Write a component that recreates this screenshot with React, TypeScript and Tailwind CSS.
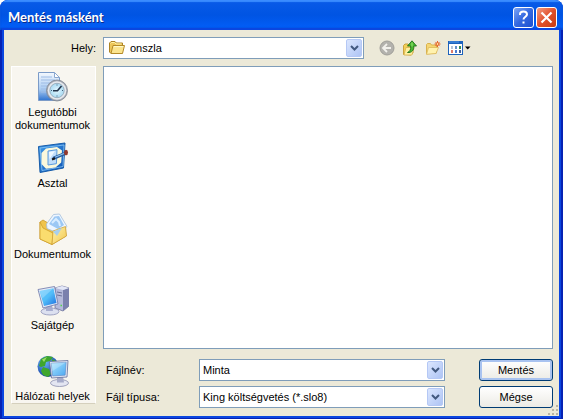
import { useState, type ReactNode } from 'react'

interface Place {
  id: string
  label: string
  icon: ReactNode
}

function RecentIcon() {
  return (
    <svg viewBox="0 0 32 32" className="size-8" aria-hidden="true">
      <defs>
        <linearGradient id="recentPage" x1="0" y1="0" x2="0" y2="1">
          <stop offset="0" stopColor="#f4f9ff" />
          <stop offset=".6" stopColor="#a9cbf2" />
          <stop offset="1" stopColor="#2f73cf" />
        </linearGradient>
        <radialGradient id="recentFace" cx=".5" cy=".5" r=".5">
          <stop offset="0" stopColor="#e3f7ff" />
          <stop offset="1" stopColor="#a8daf2" />
        </radialGradient>
      </defs>
      <path d="M1.500 1.500h16l5 5V29.500h-21z" fill="url(#recentPage)" stroke="#7b9bc8" strokeWidth="1" />
      <path d="M17.500 1.500v5h5z" fill="#fff" stroke="#8ba8d0" />
      <path d="M4 6h11M4 9h14M4 12h9M4 15h7M4 18h6M4 21h6" stroke="#9dbbe6" strokeWidth="1.200" />
      <circle cx="20" cy="19.500" r="10.500" fill="#a9aeb8" stroke="#7f858f" strokeWidth=".8" />
      <circle cx="20" cy="19.500" r="9.300" fill="#e6e9ee" />
      <circle cx="20" cy="19.500" r="7.200" fill="url(#recentFace)" stroke="#8fa3b3" strokeWidth=".8" />
      <path d="M20 13.500v1M20 24.500v1M14 19.500h1M25 19.500h1" stroke="#46627c" />
      <path d="M24.500 15l-4 4.800H16" fill="none" stroke="#22344b" strokeWidth="1.600" />
    </svg>
  )
}

function DesktopIcon() {
  return (
    <svg viewBox="0 0 32 32" className="size-8" aria-hidden="true">
      <defs>
        <linearGradient id="deskFrame" x1="0" y1="0" x2="1" y2="1">
          <stop offset="0" stopColor="#3f9aea" />
          <stop offset="1" stopColor="#0e52b2" />
        </linearGradient>
      </defs>
      <path d="M1.500 4.500l26.500-3.500-1.500 25-23.500 4.500z" fill="url(#deskFrame)" stroke="#175ca9" />
      <path d="M3 6l24-3-1 21.500-21 4z" fill="none" stroke="#8cc8f5" strokeWidth=".8" />
      <path d="M9 6.500l11-1.500 5 3.500-.8 12-5.700 5-9.500 1.300-4.500-4.800V11z" fill="#fbf9dc" />
      <path d="M11 9l9-1.300-.6 14L11 23z" fill="#c0defa" stroke="#5b9bdc" />
      <path d="M12 10l6-1-5.500 8z" fill="#eef8ff" />
      <path d="M17 16l11-4.500" stroke="#2a5d9c" strokeWidth="3" strokeLinecap="round" />
      <path d="M18 15.200l9-3.700" stroke="#8fc4f3" strokeWidth="1.200" />
      <path d="M15 17.500l3-1.200" stroke="#191919" strokeWidth="2" />
      <ellipse cx="29" cy="10.500" rx="2" ry="2.700" fill="#93392d" />
    </svg>
  )
}

function DocumentsIcon() {
  return (
    <svg viewBox="0 0 32 32" className="size-8" aria-hidden="true">
      <defs>
        <linearGradient id="docsFront" x1="0" y1="0" x2="1" y2="1">
          <stop offset="0" stopColor="#fff4ae" />
          <stop offset="1" stopColor="#f2c64c" />
        </linearGradient>
      </defs>
      <path d="M3 9l3-2 5 3 17 4 1 9-14 8.500L3 26z" fill="#f0c44c" stroke="#c99a30" strokeWidth=".8" />
      <path d="M9.500 11L16.500 1.500l6-.5 7.500 12.500-8 7-12-5z" fill="#eef6ff" stroke="#a3bedb" strokeWidth=".8" />
      <path d="M12 11l5.500-7.500 4.500-.5 5 9-6 4z" fill="#9cc8f4" />
      <path d="M15 10l4-4 3 3 1 4" fill="none" stroke="#d9edff" strokeWidth="2" />
      <path d="M3 9l3 6 10 5-1 11.500L3 26z" fill="#fadc6e" stroke="#cf9f2c" strokeWidth=".8" />
      <path d="M16 18l12.500-4.500 1 9.500L15 31.500z" fill="url(#docsFront)" stroke="#cfa138" strokeWidth=".8" />
      <path d="M16 18.500l9-3.500-5 8z" fill="#a9d0ee" />
    </svg>
  )
}

function ComputerIcon() {
  return (
    <svg viewBox="0 0 32 32" className="size-8" aria-hidden="true">
      <defs>
        <linearGradient id="pcScreen" x1="0" y1="0" x2="1" y2="1">
          <stop offset="0" stopColor="#64c8ff" />
          <stop offset=".5" stopColor="#52bdf8" />
          <stop offset="1" stopColor="#1d6fe0" />
        </linearGradient>
      </defs>
      <path d="M18 4l7-2 7 2v18l-6 5-8-3z" fill="#b5badb" stroke="#6e739c" strokeWidth=".8" />
      <path d="M26 6l6-2v18l-6 5z" fill="#7a80ad" />
      <path d="M18 4l7-2 7 2-6 2z" fill="#e3e7f7" />
      <path d="M20 8l5 1M20 11l5 1" stroke="#6b7198" />
      <path d="M23.500 21.500H25" stroke="#50d54a" strokeWidth="1.500" />
      <ellipse cx="13" cy="27.500" rx="9" ry="3.500" fill="#dce0f0" stroke="#8b90b6" strokeWidth=".8" />
      <path d="M9 22l6-1 1 6H9z" fill="#a7adcf" />
      <path d="M1 5.500l16.500-3 3.500 17.500-15 4z" fill="#e4e9f7" stroke="#6b76a8" strokeWidth=".8" />
      <path d="M2.500 7l14-2.700 3 14.700-12.500 3z" fill="url(#pcScreen)" />
      <path d="M2.500 7l14-2.700-11 10z" fill="#fff" opacity=".25" />
    </svg>
  )
}

function NetworkIcon() {
  return (
    <svg viewBox="0 0 32 32" className="size-8" aria-hidden="true">
      <defs>
        <radialGradient id="netGlobe" cx=".35" cy=".3" r=".7">
          <stop offset="0" stopColor="#6cb8fa" />
          <stop offset="1" stopColor="#143fa4" />
        </radialGradient>
        <linearGradient id="netScreen" x1="0" y1="0" x2="1" y2="1">
          <stop offset="0" stopColor="#a8e6ff" />
          <stop offset="1" stopColor="#4ba6f0" />
        </linearGradient>
      </defs>
      <circle cx="11" cy="11.500" r="10.500" fill="url(#netGlobe)" />
      <path d="M4 4l6-3 6 1-3 4-4 1-1 4-4 1-2-1zM6 12l6 2 2 5-3 3-5-2-2-4zM15 4l4 2v4h-4z" fill="#3fa62d" />
      <path d="M5 4.500l5-2.500-3 5z" fill="#9bdc66" />
      <ellipse cx="22.500" cy="28" rx="9" ry="3.500" fill="#e3e5f1" stroke="#8b8faf" strokeWidth=".8" />
      <path d="M20 21l6 0 1 6.500h-7z" fill="#a6abc9" />
      <path d="M12.500 6.500l18.500-1-1 16.500-15.500 1z" fill="#e6eaf5" stroke="#5f6b98" strokeWidth=".8" />
      <path d="M14.200 8.200l15-1-1 13-12.500.8z" fill="url(#netScreen)" stroke="#4c78bd" strokeWidth=".5" />
      <path d="M14.200 8.200l15-1-14 9z" fill="#fff" opacity=".25" />
    </svg>
  )
}

function FolderIcon() {
  return (
    <svg viewBox="0 0 16 16" className="size-4 shrink-0" aria-hidden="true">
      <path d="M.5 12V3L2 1.500h4L7.500 3h6v2L13 13.500H2z" fill="#eec75a" stroke="#ad8426" />
      <path d="M1.500 3.500L2.500 2.500h3L7 4h5.500" fill="none" stroke="#fff2a6" />
      <path d="M4 5.500h11.500L13.500 13.500H2z" fill="#fbe48e" stroke="#b58a28" />
      <path d="M4.800 6.600h9.500" stroke="#fffbd0" />
    </svg>
  )
}

function BackIcon() {
  return (
    <svg viewBox="0 0 16 16" className="size-4" aria-hidden="true">
      <circle cx="8" cy="8" r="7" fill="#b3b2ad" stroke="#a09f99" />
      <path d="M8 4L4 8l4 4M4.500 8H12" fill="none" stroke="#f2f1ec" strokeWidth="1.800" />
    </svg>
  )
}

function UpIcon() {
  return (
    <svg viewBox="0 0 16 16" className="size-4" aria-hidden="true">
      <path d="M1.500 14.500V5.500L3 4h3l1 1h4v8l-2 2z" fill="#f3cf58" stroke="#cba23e" />
      <path d="M4 7.500h8L10 15H2z" fill="#fff0a0" stroke="#d3ae4c" strokeWidth=".7" />
      <path d="M5.500 12.500c2.500-1 3.500-3 3.200-6.500H5.500L10 .8 14.500 6h-2.700c.3 4-2 7-6.300 6.500z" fill="#4aba34" stroke="#1d6f1a" strokeWidth=".9" />
      <path d="M10 2.500v4" stroke="#9be474" />
    </svg>
  )
}

function NewFolderIcon() {
  return (
    <svg viewBox="0 0 16 16" className="size-4" aria-hidden="true">
      <path d="M1.500 14V4.500L2.500 3.500h3l1 1.500h5V13z" fill="#f5d673" stroke="#d9b24d" />
      <path d="M3.500 7.500h10L11 13.500l-9.500.8z" fill="#fff2ae" stroke="#dcb75a" strokeWidth=".8" />
      <path d="M12.500 1v6M9.500 4h6M10.400 1.900l4.200 4.200M14.600 1.900l-4.200 4.200" stroke="#e4602c" />
      <circle cx="12.500" cy="4" r="1.300" fill="#fff2a5" stroke="#e35a25" strokeWidth=".8" />
    </svg>
  )
}

function ViewIcon() {
  return (
    <svg viewBox="0 0 23 16" className="h-4 w-[23px]" aria-hidden="true">
      <rect x=".5" y="1.500" width="14" height="13" fill="#fff" stroke="#1c62bc" />
      <path d="M0 2.500h15" stroke="#1c62bc" strokeWidth="3" />
      <path d="M1 2h10" stroke="#4f97ea" />
      <path d="M3 6h2v3H3z" fill="#b4c4d6" />
      <path d="M7 6h2v3H7z" fill="#5f8fcb" />
      <path d="M11 6h2v3h-2z" fill="#378c52" />
      <path d="M3 10h2v3H3z" fill="#dc7a6c" />
      <path d="M7 10h2v3H7z" fill="#4a7bd0" />
      <path d="M11 10h2v3h-2z" fill="#3f5c98" />
      <path d="M17 6.500h5.500L19.700 9.500z" fill="#000" />
    </svg>
  )
}

function DropArrow() {
  return (
    <span className="flex h-full w-4 items-center justify-center rounded-xs border border-[#b5c8f5] bg-linear-to-br from-[#dbe6fe] to-[#aec4f4]">
      <svg viewBox="0 0 9 6" className="h-1.5 w-[9px]" aria-hidden="true">
        <path d="M1 1l3.500 3.500L8 1" fill="none" stroke="#42597f" strokeWidth="2" />
      </svg>
    </span>
  )
}

const PLACES: Place[] = [
  { id: 'recent', label: 'Legutóbbi dokumentumok', icon: <RecentIcon /> },
  { id: 'desktop', label: 'Asztal', icon: <DesktopIcon /> },
  { id: 'documents', label: 'Dokumentumok', icon: <DocumentsIcon /> },
  { id: 'computer', label: 'Sajátgép', icon: <ComputerIcon /> },
  { id: 'network', label: 'Hálózati helyek', icon: <NetworkIcon /> },
]

const TOOLS = [
  { label: 'Vissza', icon: <BackIcon /> },
  { label: 'Egy szinttel feljebb', icon: <UpIcon /> },
  { label: 'Új mappa', icon: <NewFolderIcon /> },
  { label: 'Nézet', icon: <ViewIcon /> },
]

const FIELD = 'relative flex items-center border border-[#7f9db9] bg-white'
const BUTTON = 'ml-[34px] w-[74px] rounded-[3px] border border-[#003c74] bg-linear-to-b from-white to-[#ecebe5] text-center'

export default function App() {
  const [fileName, setFileName] = useState('Minta')

  return (
    <div className="flex min-h-screen flex-col overflow-hidden rounded-t-lg bg-[#0522b4] font-['Liberation_Sans',Arial,sans-serif] text-[11px] leading-[13px] text-black">
      <header className="flex h-[30px] items-center justify-between bg-linear-to-b from-[#0a5be8] via-[#0054e3] to-[#0260fb] pr-1.5 pl-2 shadow-[inset_0_2px_1px_#3a8cff,inset_0_-2px_2px_#0146cf]">
        <h1 className="pt-1 font-['Lato',sans-serif] text-[13px] font-bold text-white [text-shadow:1px_1px_#0a2a8a]">Mentés másként</h1>
        <div className="flex gap-0.5 pt-1">
          <button aria-label="Súgó" className="flex size-[21px] items-center justify-center rounded-[3px] border border-white bg-linear-to-br from-[#7ba4f5] via-[#3468e0] to-[#1c4fd0]">
            <svg viewBox="0 0 15 15" className="size-[15px]" aria-hidden="true">
              <path d="M4 5V4c0-1.500 1.500-2.500 3.500-2.500S11 2.500 11 4.500c0 2-3.500 2.500-3.500 5M7.500 11.500v2" fill="none" stroke="#fff" strokeWidth="2" />
            </svg>
          </button>
          <button aria-label="Bezárás" className="flex size-[21px] items-center justify-center rounded-[3px] border border-white bg-linear-to-br from-[#f09a80] via-[#e2502a] to-[#c83c10]">
            <svg viewBox="0 0 15 15" className="size-[15px]" aria-hidden="true">
              <path d="M2.500 2.500l10 10M12.500 2.500l-10 10" stroke="#fff" strokeWidth="2.200" />
            </svg>
          </button>
        </div>
      </header>

      <main className="relative mx-1 mb-1 flex flex-1 flex-col gap-[7px] bg-[#ece9d8] pt-[7px] pr-1.5 pb-2 pl-[7px] shadow-[0_0_0_2px_#0a46e0]">
        <div className="flex items-center gap-[7px]">
          <label htmlFor="location" className="w-[85px] text-right">Hely:</label>
          <div className={`${FIELD} h-[22px] flex-1 pl-[5px]`}>
            <FolderIcon />
            <select id="location" className="h-full min-w-0 flex-1 appearance-none pl-[5px]">
              <option>onszla</option>
            </select>
            <span className="pointer-events-none absolute inset-y-px right-px"><DropArrow /></span>
          </div>
          <div className="flex gap-[7px] pr-[82px] pl-2">
            {TOOLS.map((t) => (
              <button key={t.label} aria-label={t.label}>{t.icon}</button>
            ))}
          </div>
        </div>

        <div className="flex flex-1 gap-[7px]">
          <nav className="mb-1 w-[85px] border border-t-white border-r-white border-b-[#d5d0bd] border-l-white bg-[#f8f6f0] pt-1">
            {PLACES.map((p, i) => (
              <button key={p.id} className={`flex w-full flex-col items-center gap-[3px] pr-0.5 ${i < PLACES.length - 1 ? 'h-[71px]' : ''}`}>
                {p.icon}
                <span>{p.label}</span>
              </button>
            ))}
          </nav>

          <div className="flex min-w-0 flex-1 flex-col gap-2.5">
            <div role="listbox" aria-label="Fájlok" className="flex-1 border border-[#7f9db9] bg-white" />
            <div className="grid grid-cols-[96px_1fr_auto] gap-y-[5px]">
              <label htmlFor="filename" className="self-center pl-[3px]">Fájlnév:</label>
              <div className={`${FIELD} h-[22px]`}>
                <input
                  id="filename"
                  value={fileName}
                  onChange={(e) => setFileName(e.target.value)}
                  className="h-full min-w-0 flex-1 px-[3px] outline-none"
                />
                <button aria-label="Korábbi fájlnevek" className="h-full py-px pr-px"><DropArrow /></button>
              </div>
              <button className={`${BUTTON} shadow-[inset_0_0_0_2px_#a9c3f0]`}>Mentés</button>

              <label htmlFor="filetype" className="self-center pl-[3px]">Fájl típusa:</label>
              <div className={`${FIELD} h-[22px]`}>
                <select id="filetype" className="h-full min-w-0 flex-1 appearance-none px-[3px]">
                  <option>King költségvetés (*.slo8)</option>
                </select>
                <span className="pointer-events-none absolute inset-y-px right-px"><DropArrow /></span>
              </div>
              <button className={BUTTON}>Mégse</button>
            </div>
          </div>
        </div>

        {/* Resize grip */}
        <svg viewBox="0 0 12 12" className="absolute right-0 bottom-0 size-3" aria-hidden="true">
          <path d="M9 1h2v2H9zM5 5h2v2H5zM9 5h2v2H9zM1 9h2v2H1zM5 9h2v2H5zM9 9h2v2H9z" fill="#b8b4a3" />
        </svg>
      </main>
    </div>
  )
}
